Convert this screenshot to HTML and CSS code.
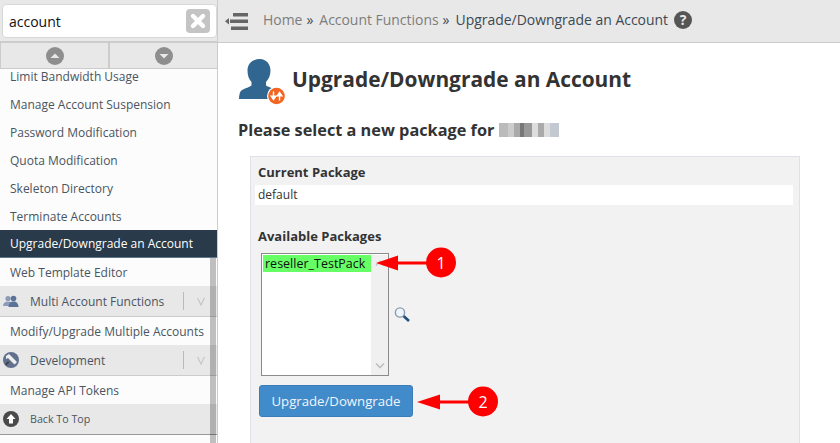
FILE: index.html
```html
<!DOCTYPE html>
<html lang="en">
<head>
<meta charset="utf-8">
<title>Upgrade/Downgrade an Account</title>
<link rel="stylesheet" href="styles.css">
</head>
<body>
<div class="app">
  <aside class="sidebar">
    <div class="search-wrap">
      <div class="search">
        <span class="search-text">account</span>
        <span class="clear"><svg width="24" height="24" viewBox="0 0 24 24"><rect width="24" height="24" rx="4" fill="#c4c4c4"/><path d="M7 7l10 10M17 7L7 17" stroke="#fff" stroke-width="4.4" stroke-linecap="round"/></svg></span>
      </div>
    </div>
    <div class="pager">
      <div class="pager-cell"><svg width="18" height="18" viewBox="0 0 18 18"><circle cx="9" cy="9" r="9" fill="#8e8e8e"/><path d="M4.500 11L9 6.500 13.500 11z" fill="#e8e8e8"/></svg></div>
      <div class="pager-cell"><svg width="18" height="18" viewBox="0 0 18 18"><circle cx="9" cy="9" r="9" fill="#8e8e8e"/><path d="M4.500 7L9 11.500 13.500 7z" fill="#e8e8e8"/></svg></div>
    </div>
    <nav class="menu">
      <a class="item first">Limit Bandwidth Usage</a>
      <a class="item">Manage Account Suspension</a>
      <a class="item">Password Modification</a>
      <a class="item">Quota Modification</a>
      <a class="item">Skeleton Directory</a>
      <a class="item">Terminate Accounts</a>
      <a class="item active">Upgrade/Downgrade an Account</a>
      <a class="item">Web Template Editor</a>
      <div class="group">
        <span class="group-icon"><svg width="16" height="12" viewBox="0 0 16 12"><circle cx="5" cy="3.500" r="2.600" fill="#8b9bb8"/><path d="M0 11c0-3 2-4.500 5-4.500S10 8 10 11z" fill="#8b9bb8"/><circle cx="10.500" cy="3.500" r="2.800" fill="#5d7299"/><path d="M5.500 12c0-3.500 2-5.500 5-5.500s5 2 5 5.500z" fill="#5d7299"/></svg></span>
        <span class="group-label">Multi Account Functions</span>
        <span class="group-chevron"><svg width="8" height="9" viewBox="0 0 8 9"><path d="M.6 1l3.400 7 3.400-7" fill="none" stroke="#c4c4c4" stroke-width="1.100"/></svg></span>
      </div>
      <a class="item">Modify/Upgrade Multiple Accounts</a>
      <div class="group">
        <span class="group-icon"><svg width="16" height="16" viewBox="0 0 16 16"><circle cx="8" cy="8" r="8" fill="#62708f"/><path d="M3 4l3-2 8 8-2.500 2.500L5 6 3 7z" fill="#eee"/><path d="M2 12l3-3 1.500 1.500-3 3z" fill="#444"/></svg></span>
        <span class="group-label">Development</span>
        <span class="group-chevron"><svg width="8" height="9" viewBox="0 0 8 9"><path d="M.6 1l3.400 7 3.400-7" fill="none" stroke="#c4c4c4" stroke-width="1.100"/></svg></span>
      </div>
      <a class="item">Manage API Tokens</a>
      <div class="back-top">
        <span class="group-icon"><svg width="16" height="16" viewBox="0 0 16 16"><circle cx="8" cy="8" r="8" fill="#4a4a4a"/><path d="M8 3l4.500 5H10v4.500H6V8H3.500z" fill="#fff"/></svg></span>
        <span class="back-label">Back To Top</span>
      </div>
    </nav>
    <div class="scrollbar"></div>
  </aside>
  <div class="main-col">
    <header class="topbar">
      <svg class="collapse" width="24" height="17" viewBox="0 0 24 17"><path d="M0 8.300L4 5v6.600z" fill="#666"/><rect x="8" y="0" width="15" height="3.500" fill="#666"/><rect x="5" y="6.500" width="18" height="3.500" fill="#666"/><rect x="6" y="13.500" width="17" height="3.500" fill="#666"/></svg>
      <span class="crumb link">Home</span><span class="sep">»</span>
      <span class="crumb link">Account Functions</span><span class="sep">»</span>
      <span class="crumb">Upgrade/Downgrade an Account</span>
      <span class="help">?</span>
    </header>
    <main class="content">
      <div class="title-row">
        <svg class="title-icon" width="46" height="46" viewBox="0 0 46 46"><path d="M21 0c6 0 10.500 5 10.500 11.500 0 5-2 9-4.500 11.500v3.500c3 2 9 2.500 10 7 .5 2 .5 4 .5 6.500H0c0-3 .5-5.500 1.500-7.500 2-3 8-3.500 11-6V23c-2.500-2.500-4-6.500-4-11.500C8.500 5 13 0 21 0z" fill="#316691"/><circle cx="37.500" cy="37" r="9.500" fill="#fff"/><circle cx="37.500" cy="37" r="8.300" fill="#f26522"/><path d="M34.500 32.500v5M32.200 37.200l2.300 3.300 2.300-3.300z" stroke="#fff" stroke-width="1.400" fill="#fff"/><path d="M40.500 41.500v-5M38.200 36.800l2.300-3.300 2.300 3.300z" stroke="#fff" stroke-width="1.400" fill="#fff"/></svg>
        <h1 class="title">Upgrade/Downgrade an Account</h1>
      </div>
      <h2 class="subtitle"><span>Please select a new package for</span><span class="blur"></span></h2>
      <section class="panel">
        <div class="label">Current Package</div>
        <div class="value">default</div>
        <div class="label second">Available Packages</div>
        <div class="picker">
          <div class="listbox">
            <div class="list-area"><div class="option">reseller_TestPack</div></div>
            <div class="list-scroll">
              <svg width="10" height="7" viewBox="0 0 10 7"><path d="M1 5.500l4-4 4 4" fill="none" stroke="#c9c9c9" stroke-width="1.600"/></svg>
              <svg width="10" height="7" viewBox="0 0 10 7"><path d="M1 1.500l4 4 4-4" fill="none" stroke="#c0c0c0" stroke-width="1.600"/></svg>
            </div>
          </div>
          <svg class="magnifier" width="16" height="15" viewBox="0 0 16 15"><line x1="9.500" y1="9" x2="15" y2="14" stroke="#1f4f7a" stroke-width="2.600"/><circle cx="6" cy="5.500" r="4.600" fill="#eef5fb" stroke="#8a9aa8" stroke-width="1.400"/></svg>
        </div>
        <button class="submit" type="button">Upgrade/Downgrade</button>
      </section>
    </main>
  </div>
</div>
<svg class="annot annot-one" width="90" height="34" viewBox="0 0 90 34">
  <path d="M1 17L23 9.500V15.500H54v3H23v6z" fill="#f00"/>
  <circle cx="66" cy="16.500" r="15" fill="#f00"/>
  <text x="66" y="22.500" text-anchor="middle" class="annot-num">1</text>
</svg>
<svg class="annot annot-two" width="90" height="34" viewBox="0 0 90 34">
  <path d="M0 17L23 9.500V15.500H54v3H23v6z" fill="#f00"/>
  <circle cx="66" cy="16.500" r="15" fill="#f00"/>
  <text x="66" y="22.500" text-anchor="middle" class="annot-num">2</text>
</svg>
</body>
</html>
```

FILE: styles.css
```css
* { box-sizing: border-box; }
html, body { margin: 0; height: 443px; overflow: hidden; }
body { font-family: "Open Sans", "Liberation Sans", sans-serif; background: #fff; color: #333; position: relative; }
.app { display: flex; height: 443px; }

.sidebar { width: 218px; flex: none; position: relative; background: #fcfcfc; border-right: 1px solid #ccc; overflow: hidden; }
.search-wrap { height: 43px; padding: 4px 0 0 2px; background: #e8e8e8; border-bottom: 2px solid #ccc; }
.search { width: 215px; height: 34px; background: #fff; border: 1px solid #d8d8d8; border-radius: 4px; display: flex; align-items: center; padding: 0 6px; justify-content: space-between; }
.search-text { font-size: 14px; color: #111; }
.clear { display: flex; }
.pager { display: flex; height: 26px; background: #e8e8e8; border-bottom: 1px solid #ccc; border-left: 1px solid #ccc; }
.pager-cell { flex: 1; display: flex; align-items: center; justify-content: center; padding-left: 1px; }
.pager-cell + .pager-cell { border-left: 2px solid #ccc; }

.menu { display: flex; flex-direction: column; font-size: 12px; color: #4a5561; }
.item { display: flex; align-items: center; height: 28px; padding-left: 10px; white-space: nowrap; }
.item.first { height: 21px; align-items: flex-start; line-height: 16px; }
.item.active { background: #293a4a; color: #fff; border-bottom: 1px solid #5f7688; }
.group { display: flex; align-items: center; height: 31px; background: #e8e8e8; border-bottom: 1px solid #ccc; }
.back-top { display: flex; align-items: center; height: 31px; background: #e8e8e8; border-bottom: 1px solid #999; }
.group-icon { width: 30px; display: flex; padding-left: 3px; flex: none; }
.group-label { width: 154px; color: #4a5561; border-right: 1px solid #bbb; line-height: 16px; height: 18px; padding-top: 2px; flex: none; display: flex; align-items: center; }
.group-chevron { flex: 1; padding-left: 13px; display: flex; }
.back-label { font-size: 10.7px; color: #4a5561; }
.scrollbar { position: absolute; left: 210px; top: 258px; width: 6px; height: 185px; background: rgba(0,0,0,0.24); }

.main-col { flex: 1; min-width: 0; display: flex; flex-direction: column; }
.topbar { height: 43px; background: #e8e8e8; border-bottom: 1px solid #ccc; display: flex; align-items: center; padding-left: 7px; font-size: 13.95px; flex: none; padding-bottom: 3px; }
.collapse { margin: 4px 14px 0 0; }
.crumb { color: #3d4852; }
.crumb.link { color: #7d7d7d; }
.sep { color: #3d4852; margin: 0 6px 0 4px; }
.help { width: 18px; height: 18px; border-radius: 50%; background: #555; color: #e8e8e8; font-size: 14px; font-weight: 700; display: flex; align-items: center; justify-content: center; margin-left: 6px; }

.content { padding: 16px 0 0 20px; }
.title-row { display: flex; align-items: flex-start; gap: 7px; padding-left: 1px; }
.title-icon { flex: none; }
.title { margin: 5px 0 0; font-size: 20.9px; font-weight: 700; color: #333; line-height: 30px; }
.subtitle { margin: 15px 0 0; font-size: 16.3px; font-weight: 700; color: #333; line-height: 20px; display: flex; align-items: center; gap: 5px; white-space: nowrap; }
.blur { width: 60px; height: 14px; display: inline-block; background: linear-gradient(90deg, #bbb 0 15%, #ccc 15% 25%, #aaa 25% 35%, #777 35% 42%, #999 42% 55%, #ddd 55% 65%, #aaa 65% 75%, #ddd 75% 85%, #c3c9d0 85% 100%); }

.panel { margin: 16px 0 0 12px; width: 550px; height: 300px; background: #f2f2f3; border: 1px solid #e0e0e8; padding: 5px 6px 0 4px; }
.label { font-size: 13px; font-weight: 700; color: #333; line-height: 20px; padding-left: 3px; }
.label.second { margin-top: 21px; }
.value { background: #fff; height: 20px; font-size: 12px; line-height: 20px; margin-top: 3px; padding-left: 3px; }
.picker { display: flex; align-items: center; margin: 7px 0 0 6px; gap: 5px; }
.listbox { width: 128px; height: 123px; border: 1px solid #8a8a8f; background: #fff; display: flex; padding: 1px 0 0 1px; }
.list-area { flex: 1; }
.option { background: #6f6; color: #111; font-size: 12.5px; line-height: 17px; height: 17px; padding-left: 2px; white-space: nowrap; }
.list-scroll { width: 17px; background: #f0f0f0; display: flex; flex-direction: column; justify-content: space-between; align-items: center; padding: 5px 0 6px; }
.submit { display: block; margin: 9px 0 0 4px; width: 154px; height: 32px; background: #428bca; border: 1px solid #3a7db8; border-radius: 3px; color: #f0f5fa; font: 13.2px "Open Sans", sans-serif; padding: 0; }

.annot { position: absolute; }
.annot-one { left: 375px; top: 246px; }
.annot-two { left: 417px; top: 385px; }
.annot-num { font: 16px "Open Sans", sans-serif; fill: #fff; }
```
